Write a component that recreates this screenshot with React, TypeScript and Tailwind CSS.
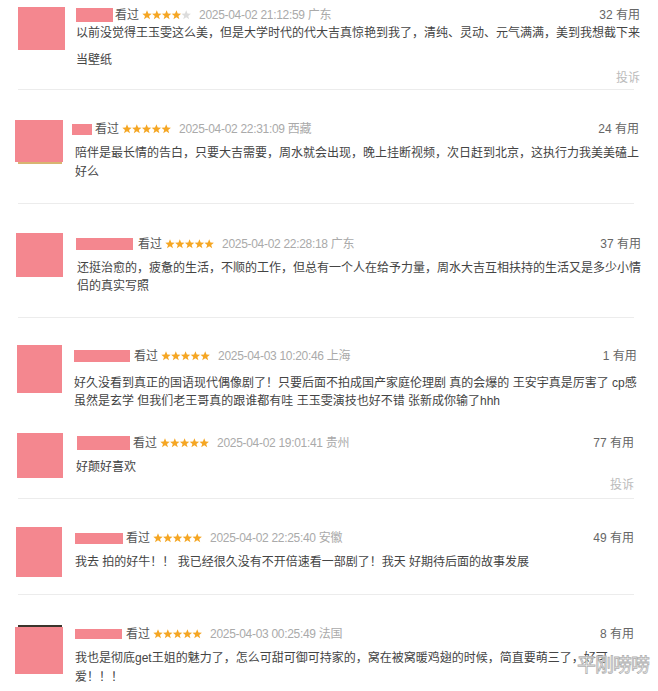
import React from "react";

type Review = {
  section: string;
  row: string;
  avatar: string;
  col: string;
  name: string;
  body: string;
  lines: string[];
  date: string;
  stars: number;
  useful: number;
  report?: string;
  divider: boolean;
  extra?: "bottom" | "top";
};

const reviews: Review[] = [
  {
    section: "h-[89px]",
    row: "pl-[18px]",
    avatar: "mt-[7px] w-[47px] h-[43px]",
    col: "ml-[11px] pt-[7px]",
    name: "w-[37px] h-[14px] mr-[2px]",
    body: "mt-[-3px] leading-[27px]",
    lines: [
      "以前没觉得王玉雯这么美，但是大学时代的代大吉真惊艳到我了，清纯、灵动、元气满满，美到我想截下来",
      "当壁纸",
    ],
    date: "2025-04-02 21:12:59 广东",
    stars: 4,
    useful: 32,
    report: "mt-[-4px]",
    divider: true,
  },
  {
    section: "h-[113px]",
    row: "pl-[15px]",
    avatar: "mt-[30px] w-[48px] h-[42px]",
    col: "ml-[9px] pt-[31px]",
    name: "w-[20px] h-[11px] mr-[3px]",
    body: "mt-[7px] leading-[19px] pl-[3px]",
    lines: [
      "陪伴是最长情的告白，只要大吉需要，周水就会出现，晚上挂断视频，次日赶到北京，这执行力我美美磕上",
      "好么",
    ],
    date: "2025-04-02 22:31:09 西藏",
    stars: 5,
    useful: 24,
    divider: true,
    extra: "bottom",
  },
  {
    section: "h-[113px]",
    row: "pl-[16px]",
    avatar: "mt-[29px] w-[47px] h-[44px]",
    col: "ml-[13px] pt-[32px]",
    name: "w-[57px] h-[12px] mr-[5px]",
    body: "mt-[7px] leading-[18px] pl-[1px]",
    lines: [
      "还挺治愈的，疲惫的生活，不顺的工作，但总有一个人在给予力量，周水大吉互相扶持的生活又是多少小情",
      "侣的真实写照",
    ],
    date: "2025-04-02 22:28:18 广东",
    stars: 5,
    useful: 37,
    divider: true,
  },
  {
    section: "h-[100px]",
    row: "pl-[17px]",
    avatar: "mt-[27px] w-[45px] h-[48px]",
    col: "ml-[12px] pt-[30px]",
    name: "w-[56px] h-[12px] mr-[4px]",
    body: "mt-[10px] leading-[18px]",
    lines: [
      "好久没看到真正的国语现代偶像剧了！只要后面不拍成国产家庭伦理剧 真的会爆的 王安宇真是厉害了 cp感",
      "虽然是玄学 但我们老王哥真的跟谁都有哇 王玉雯演技也好不错 张新成你输了hhh",
    ],
    date: "2025-04-03 10:20:46 上海",
    stars: 5,
    useful: 1,
    divider: false,
  },
  {
    section: "h-[80px]",
    row: "pl-[17px]",
    avatar: "mt-[15px] w-[46px] h-[45px]",
    col: "ml-[13px] pt-[17px]",
    name: "w-[53px] h-[14px] mr-[3px] ml-[1px]",
    body: "mt-[7px] leading-[18px]",
    lines: ["好颠好喜欢"],
    date: "2025-04-02 19:01:41 贵州",
    stars: 5,
    useful: 77,
    report: "mt-[1px]",
    divider: true,
  },
  {
    section: "h-[95px]",
    row: "pl-[16px]",
    avatar: "mt-[28px] w-[46px] h-[50px]",
    col: "ml-[13px] pt-[31px]",
    name: "w-[48px] h-[11px] mr-[3px]",
    body: "mt-[7px] leading-[18px]",
    lines: ["我去 拍的好牛！！ 我已经很久没有不开倍速看一部剧了！我天 好期待后面的故事发展"],
    date: "2025-04-02 22:25:40 安徽",
    stars: 5,
    useful: 49,
    divider: true,
  },
  {
    section: "h-[96px]",
    row: "pl-[15px]",
    avatar: "w-[48px] h-[47px]",
    col: "ml-[12px] pt-[31px]",
    name: "w-[47px] h-[10px] mr-[4px]",
    body: "mt-[7px] leading-[19px]",
    lines: [
      "我也是彻底get王姐的魅力了，怎么可甜可御可持家的，窝在被窝暖鸡翅的时候，简直要萌三了，好可",
      "爱！！！",
    ],
    date: "2025-04-03 00:25:49 法国",
    stars: 5,
    useful: 8,
    divider: false,
    extra: "top",
  },
];

const STAR =
  "M5 0.3 L6.3 3.5 L9.7 3.7 L7 5.9 L8 9.3 L5 7.3 L2 9.3 L3 5.9 L0.3 3.7 L3.7 3.5 Z";

function Stars({ count }: { count: number }) {
  return (
    <svg width="49" height="10" viewBox="0 0 49 10" className="shrink-0">
      {[0, 1, 2, 3, 4].map((i) => (
        <path
          key={i}
          d={STAR}
          transform={`translate(${i * 9.8} 0)`}
          fill={i < count ? "#f5a623" : "#dcdcdc"}
        />
      ))}
    </svg>
  );
}

function ReviewItem({ r }: { r: Review }) {
  return (
    <>
      <div className={`${r.section} flex ${r.row} pr-[24px]`}>
        <div className="shrink-0 flex flex-col">
          {r.extra === "top" && (
            <div className="mt-[30px] ml-[3px] w-[44px] h-[2px] bg-[#3b342c]" />
          )}
          <div className={`${r.avatar} bg-[#f4878f]`} />
          {r.extra === "bottom" && (
            <div className="ml-[3px] w-[44px] h-[2px] bg-[#d8b571]" />
          )}
        </div>
        <div className={`${r.col} flex-1 flex flex-col`}>
          <div className="flex items-center h-4 text-[12px]">
            <span className={`${r.name} bg-[#f4878f] shrink-0`} />
            <span className="text-[#555]">看过</span>
            <span className="ml-[3px] mr-[8px] flex items-center">
              <Stars count={r.stars} />
            </span>
            <span className="text-[#aaa] tracking-[-0.3px]">{r.date}</span>
            <span className="ml-auto text-[#666]">{r.useful} 有用</span>
          </div>
          <div className={`${r.body} text-[12px] text-[#444]`}>
            {r.lines.map((l, i) => (
              <div key={i} className="whitespace-nowrap">
                {l}
              </div>
            ))}
          </div>
          {r.report && (
            <div className={`${r.report} h-4 leading-4 text-right text-[12px] text-[#bbb]`}>
              投诉
            </div>
          )}
        </div>
      </div>
      {r.divider && <div className="ml-[18px] mr-[24px] h-px bg-[#ececec]" />}
    </>
  );
}

export default function App() {
  return (
    <div
      className="relative w-[658px] h-[691px] overflow-hidden bg-white"
      style={{ fontFamily: '"Liberation Sans", "Noto Sans CJK SC", sans-serif' }}
    >
      {reviews.map((r, i) => (
        <ReviewItem key={i} r={r} />
      ))}

      {/* watermark */}
      <div className="absolute left-[577px] top-[654px] text-[19px] leading-[24px] text-white/80 tracking-[-1px] [-webkit-text-stroke:0.8px_#b0b0b0]">
        平刚唠唠
      </div>
    </div>
  );
}
